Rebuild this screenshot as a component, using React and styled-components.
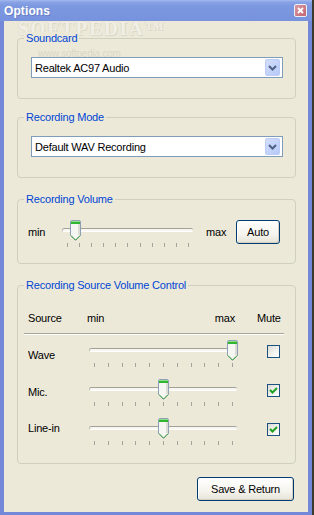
import React from "react";
import styled, { createGlobalStyle } from "styled-components";

const Global = createGlobalStyle`
  html, body {
    margin: 0;
    padding: 0;
    background: #3b3a2c;
  }
  body {
    font-family: "Liberation Sans", Arial, sans-serif;
    font-size: 11px;
    letter-spacing: -0.2px;
  }
`;

const Window = styled.div`
  width: 312px;
  height: 515px;
  display: flex;
  flex-direction: column;
  background: #7388d8;
  box-sizing: border-box;
`;

const TitleBar = styled.div`
  height: 21px;
  flex: none;
  display: flex;
  align-items: center;
  justify-content: space-between;
  padding: 0 5px 0 4px;
  background: linear-gradient(#a3b9ee 0, #8aa3e6 2px, #7c98e0 6px, #7893de 100%);
`;

const Title = styled.span`
  color: #fff;
  font-weight: bold;
  font-size: 12px;
  letter-spacing: 0.1px;
  text-shadow: 1px 1px 0 #6a7fc8;
`;

const CloseBtn = styled.div`
  width: 11px;
  height: 11px;
  border: 1px solid #e9eefb;
  border-radius: 2px;
  background: linear-gradient(135deg, #d99aa4, #c2646f);
  display: flex;
  align-items: center;
  justify-content: center;
`;

const Body = styled.div`
  position: relative;
  flex: 1;
  margin: 0 4px 3px 4px;
  background: #ece9d8;
  display: flex;
  flex-direction: column;
  padding: 0 12px 0 13px;
`;

const Watermark = styled.div`
  position: absolute;
  left: 14px;
  top: 1px;
  font-family: "Liberation Serif", serif;
  font-weight: bold;
  font-size: 19px;
  line-height: 14px;
  letter-spacing: 2px;
  color: #f1efe5;
  text-shadow: 1px 1px 0 #dcd8c7, -1px 0 0 #e2dfcf;
  pointer-events: none;
`;

const WatermarkUrl = styled.div`
  position: absolute;
  left: 34px;
  top: 27px;
  font-size: 10px;
  line-height: 11px;
  color: #dad7c7;
  pointer-events: none;
`;

const Group = styled.div`
  display: flex;
  flex-direction: column;
  border: 1px solid #d0d0bf;
  border-radius: 4px;
  margin-top: ${(p) => p.$mt}px;
  padding: 0 ${(p) => p.$pr || 0}px ${(p) => p.$pb}px ${(p) => p.$pl || 0}px;
  position: relative;
`;

const GroupLabel = styled.div`
  align-self: flex-start;
  margin: -7px 0 0 ${(p) => 6 - (p.$pl || 0)}px;
  padding: 0 2px;
  line-height: 13px;
  background: #ece9d8;
  color: #0046d5;
  position: relative;
  z-index: 1;
`;

const SelectBox = styled.div`
  margin: 12px 0 0 13px;
  width: 252px;
  height: 21px;
  box-sizing: border-box;
  border: 1px solid #7f9db9;
  background: #fff;
  display: flex;
  align-items: center;
  justify-content: space-between;
  padding: 0 2px 0 3px;
  color: #000;
`;

const DropBtn = styled.div`
  width: 15px;
  height: 17px;
  box-sizing: border-box;
  border: 1px solid #bcccf4;
  border-radius: 2px;
  background: linear-gradient(135deg, #d3defb, #b6c9f7);
  display: flex;
  align-items: center;
  justify-content: center;
`;

const VolumeRow = styled.div`
  display: flex;
  align-items: flex-start;
  margin-top: 14px;
  padding-left: 10px;
`;

const SideLabel = styled.span`
  width: ${(p) => p.$w}px;
  margin: 6px 0 0 ${(p) => p.$ml || 0}px;
  line-height: 13px;
  color: #000;
  flex: none;
`;

const XpButton = styled.div`
  box-sizing: border-box;
  width: ${(p) => p.$w}px;
  height: ${(p) => p.$h}px;
  border: 1px solid #003c74;
  border-radius: 3px;
  background: linear-gradient(#ffffff 0%, #f5f4ee 60%, #e6e3d6 100%);
  box-shadow: inset -1px -1px 0 #d6d0c3, inset 1px 1px 0 #fff;
  display: flex;
  align-items: center;
  justify-content: center;
  color: #000;
  flex: none;
`;

const SliderWrap = styled.div`
  position: relative;
  width: ${(p) => p.$w}px;
  height: 28px;
  flex: none;
  box-sizing: border-box;
  padding: 23px 4px 0 5px;
`;

const Track = styled.div`
  position: absolute;
  left: 0;
  right: 0;
  top: 8px;
  height: 2px;
  border-top: 1px solid #a2a19a;
  border-left: 1px solid #b9b7ad;
  border-bottom: 1px solid #ffffff;
  border-radius: 2px;
  background: #f7f6f1;
`;

const Thumb = styled.svg`
  position: absolute;
  top: 0;
`;

const Ticks = styled.div`
  display: flex;
  justify-content: space-between;
`;

const Tick = styled.span`
  width: 1px;
  height: 4px;
  background: #a3a29b;
`;

const SourceGrid = styled.div`
  display: grid;
  grid-template-columns: 65px 148px 1fr;
`;

const HeaderRow = styled(SourceGrid)`
  margin-top: 20px;
  line-height: 13px;
  color: #000;
`;

const HeadCell = styled.span`
  padding-left: ${(p) => p.$pl || 0}px;
  display: flex;
  justify-content: space-between;
`;

const RangeHead = styled(HeadCell)`
  margin-left: -2px;
  padding-right: 2px;
`;

const Separator = styled.div`
  margin-top: 8px;
  height: 0;
  border-top: 1px solid #a7a699;
  border-bottom: 1px solid #ffffff;
`;

const SourceRow = styled(SourceGrid)`
  margin-top: ${(p) => p.$mt}px;
  height: 28px;
`;

const RowLabel = styled.span`
  padding: ${(p) => p.$top}px 0 0 4px;
  line-height: 13px;
  color: #000;
`;

const CheckBox = styled.div`
  width: 13px;
  height: 13px;
  box-sizing: border-box;
  margin: 5px 0 0 30px;
  border: 1px solid #1c5180;
  background: linear-gradient(135deg, #dcdcd5 0%, #f2f2ee 55%, #ffffff 100%);
  display: flex;
  align-items: center;
  justify-content: center;
`;

const SaveButton = styled(XpButton)`
  align-self: flex-end;
  margin: 13px 2px 0 0;
`;

function Slider({ width, value }) {
  const first = 5.5;
  const last = width - 4.5;
  const left = first + value * (last - first) - 5.5;
  return (
    <SliderWrap $w={width}>
      <Track />
      <Ticks>
        {Array.from({ length: 11 }).map((_, i) => (
          <Tick key={i} />
        ))}
      </Ticks>
      <Thumb width="11" height="21" viewBox="0 0 11 21" style={{ left }}>
        <path
          d="M0.5 2 Q0.5 0.5 2 0.5 H9 Q10.5 0.5 10.5 2 V15.5 L5.5 20.5 L0.5 15.5 Z"
          fill="#f6f6f2"
          stroke="#8f9fb3"
        />
        <rect x="1" y="1" width="9" height="1" fill="#8ee08e" />
        <rect x="1" y="2" width="9" height="2" fill="#2fb52f" />
        <rect x="8" y="4" width="2" height="11" fill="#dcdcd4" />
        <path d="M1 15.5 L5.5 20 L10 15.5" fill="none" stroke="#3aa53a" strokeWidth="1" />
      </Thumb>
    </SliderWrap>
  );
}

function Select({ value }) {
  return (
    <SelectBox>
      <span>{value}</span>
      <DropBtn>
        <svg width="9" height="6" viewBox="0 0 9 6">
          <path d="M1 1 L4.5 4.5 L8 1" fill="none" stroke="#4d6185" strokeWidth="2" />
        </svg>
      </DropBtn>
    </SelectBox>
  );
}

function Check({ checked }) {
  return (
    <CheckBox>
      {checked && (
        <svg width="9" height="9" viewBox="0 0 9 9">
          <path d="M1 4 L3.5 6.5 L8 2" fill="none" stroke="#21a121" strokeWidth="2" />
        </svg>
      )}
    </CheckBox>
  );
}

const sources = [
  { name: "Wave", value: 1, muted: false, top: 9, mt: 5 },
  { name: "Mic.", value: 0.5, muted: true, top: 7, mt: 11 },
  { name: "Line-in", value: 0.5, muted: true, top: 4, mt: 11 },
];

export default function App() {
  return (
    <>
      <Global />
      <Window>
        <TitleBar>
          <Title>Options</Title>
          <CloseBtn>
            <svg width="7" height="7" viewBox="0 0 7 7">
              <path d="M1 1 L6 6 M6 1 L1 6" stroke="#fff" strokeWidth="1.8" />
            </svg>
          </CloseBtn>
        </TitleBar>
        <Body>
          <Watermark>SOFTPEDIA™</Watermark>
          <WatermarkUrl>www.softpedia.com</WatermarkUrl>

          <Group $mt={17} $pb={20}>
            <GroupLabel>Soundcard</GroupLabel>
            <Select value="Realtek AC97 Audio" />
          </Group>

          <Group $mt={18} $pb={20}>
            <GroupLabel>Recording Mode</GroupLabel>
            <Select value="Default WAV Recording" />
          </Group>

          <Group $mt={21} $pb={15}>
            <GroupLabel>Recording Volume</GroupLabel>
            <VolumeRow>
              <SideLabel $w={34}>min</SideLabel>
              <Slider width={131} value={0.064} />
              <SideLabel $w={30} $ml={13}>max</SideLabel>
              <XpButton $w={44} $h={24}>Auto</XpButton>
            </VolumeRow>
          </Group>

          <Group $mt={21} $pb={17} $pl={6} $pr={11}>
            <GroupLabel $pl={6}>Recording Source Volume Control</GroupLabel>
            <HeaderRow>
              <HeadCell $pl={4}>Source</HeadCell>
              <RangeHead>
                <span>min</span>
                <span>max</span>
              </RangeHead>
              <HeadCell $pl={20}>Mute</HeadCell>
            </HeaderRow>
            <Separator />
            {sources.map((s) => (
              <SourceRow key={s.name} $mt={s.mt}>
                <RowLabel $top={s.top}>{s.name}</RowLabel>
                <Slider width={148} value={s.value} />
                <Check checked={s.muted} />
              </SourceRow>
            ))}
          </Group>

          <SaveButton $w={97} $h={24}>Save &amp; Return</SaveButton>
        </Body>
      </Window>
    </>
  );
}
